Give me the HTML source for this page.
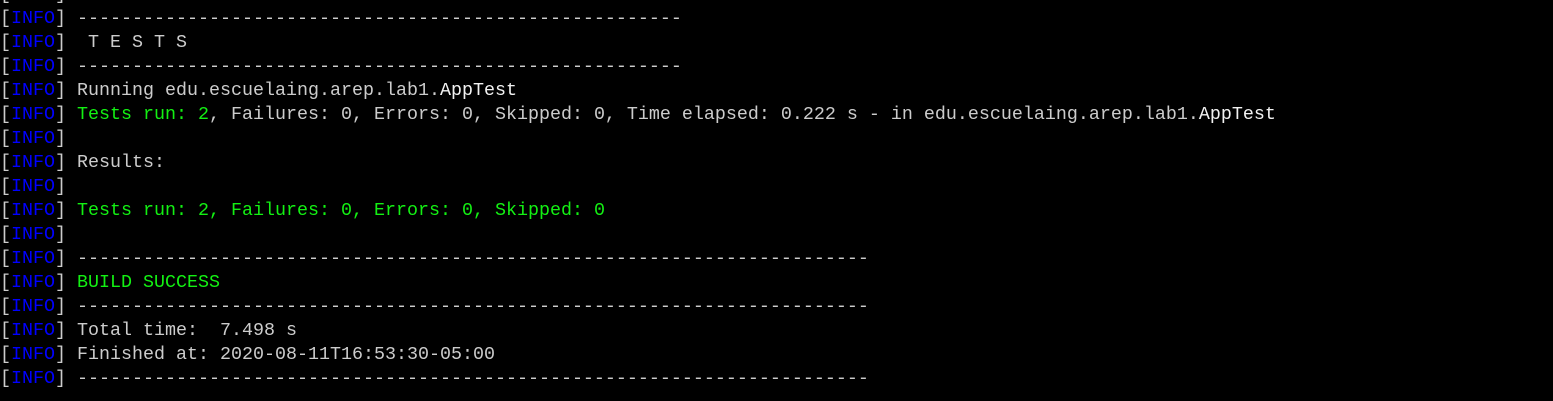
<!DOCTYPE html>
<html><head><style>
html,body{margin:0;padding:0;background:#000;width:1553px;height:401px;overflow:hidden}
pre{margin:0;position:absolute;left:0;top:-17px;font-family:"Liberation Mono",monospace;font-size:18.33px;line-height:24px;color:#cccccc;letter-spacing:0}
.b{color:#0000ff}.g{color:#13f013}.w{color:#f2f2f2}
</style></head><body>
<pre>[<span class="b">INFO</span>]
[<span class="b">INFO</span>] -------------------------------------------------------
[<span class="b">INFO</span>]  T E S T S
[<span class="b">INFO</span>] -------------------------------------------------------
[<span class="b">INFO</span>] Running edu.escuelaing.arep.lab1.<span class="w">AppTest</span>
[<span class="b">INFO</span>] <span class="g">Tests run: 2</span>, Failures: 0, Errors: 0, Skipped: 0, Time elapsed: 0.222 s - in edu.escuelaing.arep.lab1.<span class="w">AppTest</span>
[<span class="b">INFO</span>]
[<span class="b">INFO</span>] Results:
[<span class="b">INFO</span>]
[<span class="b">INFO</span>] <span class="g">Tests run: 2, Failures: 0, Errors: 0, Skipped: 0</span>
[<span class="b">INFO</span>]
[<span class="b">INFO</span>] ------------------------------------------------------------------------
[<span class="b">INFO</span>] <span class="g">BUILD SUCCESS</span>
[<span class="b">INFO</span>] ------------------------------------------------------------------------
[<span class="b">INFO</span>] Total time:  7.498 s
[<span class="b">INFO</span>] Finished at: 2020-08-11T16:53:30-05:00
[<span class="b">INFO</span>] ------------------------------------------------------------------------
</pre>
</body></html>
